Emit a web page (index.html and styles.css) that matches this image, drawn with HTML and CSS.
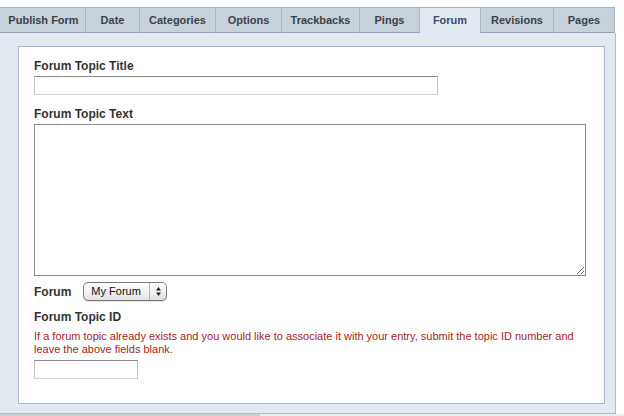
FILE: index.html
```html
<!DOCTYPE html>
<html>
<head>
<meta charset="utf-8">
<link rel="stylesheet" href="styles.css">
</head>
<body>
<div class="editor">
  <ul class="tabs">
    <li class="tab t1">Publish Form</li>
    <li class="tab t2">Date</li>
    <li class="tab t3">Categories</li>
    <li class="tab t4">Options</li>
    <li class="tab t5">Trackbacks</li>
    <li class="tab t6">Pings</li>
    <li class="tab t7 active">Forum</li>
    <li class="tab t8">Revisions</li>
    <li class="tab t9">Pages</li>
  </ul>
  <div class="panel">
    <div class="box">
      <label class="lbl top-lbl">Forum Topic Title</label>
      <input class="field title-field" type="text">
      <label class="lbl top-lbl">Forum Topic Text</label>
      <textarea class="area"></textarea>
      <div class="forum-row">
        <span class="lbl inline">Forum</span>
        <span class="select">
          <span class="select-text">My Forum</span>
          <span class="select-arrows">
            <svg width="7" height="11" viewBox="0 0 7 11"><path d="M3.5 1 L6 4.5 H1 Z" fill="#222"/><path d="M3.5 10 L6 6.5 H1 Z" fill="#222"/></svg>
          </span>
        </span>
      </div>
      <label class="lbl id-lbl">Forum Topic ID</label>
      <p class="hint">If a forum topic already exists and you would like to associate it with your entry, submit the topic ID number and<br>leave the above fields blank.</p>
      <input class="field id-field" type="text">
    </div>
  </div>
  <div class="scroll"><div class="scroll-thumb"></div></div>
</div>
</body>
</html>
```

FILE: styles.css
```css
html, body {
  margin: 0;
  padding: 0;
  background: #ffffff;
  font-family: "Liberation Sans", Arial, sans-serif;
}

.editor {
  width: 624px;
  height: 416px;
  padding-top: 7px;
  box-sizing: border-box;
}

.tabs {
  list-style: none;
  margin: 0;
  padding: 0;
  display: flex;
  height: 26px;
}

.tab {
  box-sizing: border-box;
  height: 26px;
  background: #c6d1db;
  border-top: 1px solid #a9b5c1;
  border-right: 1px solid #a9b5c1;
  border-bottom: 1px solid #97a4b2;
  font-size: 11px;
  font-weight: bold;
  color: #3e4247;
  display: flex;
  align-items: center;
  justify-content: center;
}

.t1 { width: 86px; padding-left: 2px; }
.t2 { width: 54px; }
.t3 { width: 76px; }
.t4 { width: 66px; }
.t5 { width: 78px; }
.t6 { width: 60px; }
.t7 { width: 61px; }
.t8 { width: 73px; }
.t9 { width: 61px; }

.tab.active {
  background: #e2e9f1;
  border-bottom: none;
  border-left: 1px solid #a9b5c1;
  margin-left: -1px;
  width: 62px;
  color: #3d4b6e;
  padding-bottom: 1px;
}

.panel {
  width: 616px;
  box-sizing: border-box;
  background: #e2e9f1;
  border-right: 1px solid #b1bccb;
  border-bottom: 1px solid #b1bccb;
  padding: 13px 10px 9px 18px;
}

.box {
  background: #ffffff;
  border: 1px solid #aab6c7;
  padding: 12px 18px 24px 15px;
  display: flex;
  flex-direction: column;
  align-items: flex-start;
}

.lbl {
  font-size: 12px;
  line-height: 15px;
  font-weight: bold;
  color: #333333;
  margin-bottom: 3px;
}

.lbl.top-lbl {
  margin-bottom: 2px;
}

.field {
  box-sizing: border-box;
  height: 19px;
  margin: 0;
  padding: 0 3px;
  border-top: 1px solid #8a8a8a;
  border-left: 1px solid #c2c2c2;
  border-right: 1px solid #c2c2c2;
  border-bottom: 1px solid #d4d4d4;
  background: #fff;
  font-size: 11px;
  outline: none;
}

.title-field {
  width: 404px;
  margin-bottom: 12px;
}

.area {
  box-sizing: border-box;
  width: 552px;
  height: 152px;
  margin: 0;
  border: 1px solid #8c8c8c;
  background: #fff;
  outline: none;
  resize: both;
}

.forum-row {
  display: flex;
  align-items: center;
  margin-top: 5px;
  height: 20px;
}

.lbl.inline {
  margin: 3px 12px 0 0;
}

.select {
  box-sizing: border-box;
  width: 84px;
  height: 19px;
  border: 1px solid #7a7a7a;
  border-radius: 5px;
  background: linear-gradient(#ffffff, #f2f2f2 50%, #e0e0e0);
  display: flex;
  align-items: center;
  box-shadow: 0 1px 0 rgba(0,0,0,0.12);
}

.select-text {
  flex: 1;
  padding-left: 7px;
  font-size: 11px;
  color: #111;
}

.select-arrows {
  width: 16px;
  height: 100%;
  border-left: 1px solid #b5b5b5;
  display: flex;
  align-items: center;
  justify-content: center;
}

.id-lbl {
  margin-top: 9px;
  margin-bottom: 5px;
}

.hint {
  margin: 0 0 4px 0;
  font-size: 11px;
  line-height: 13px;
  color: #a51d1d;
}

.id-field {
  width: 104px;
}

.scroll {
  height: 2px;
  background: #ececec;
}

.scroll-thumb {
  width: 260px;
  height: 2px;
  background: #cfcfcf;
}
```
